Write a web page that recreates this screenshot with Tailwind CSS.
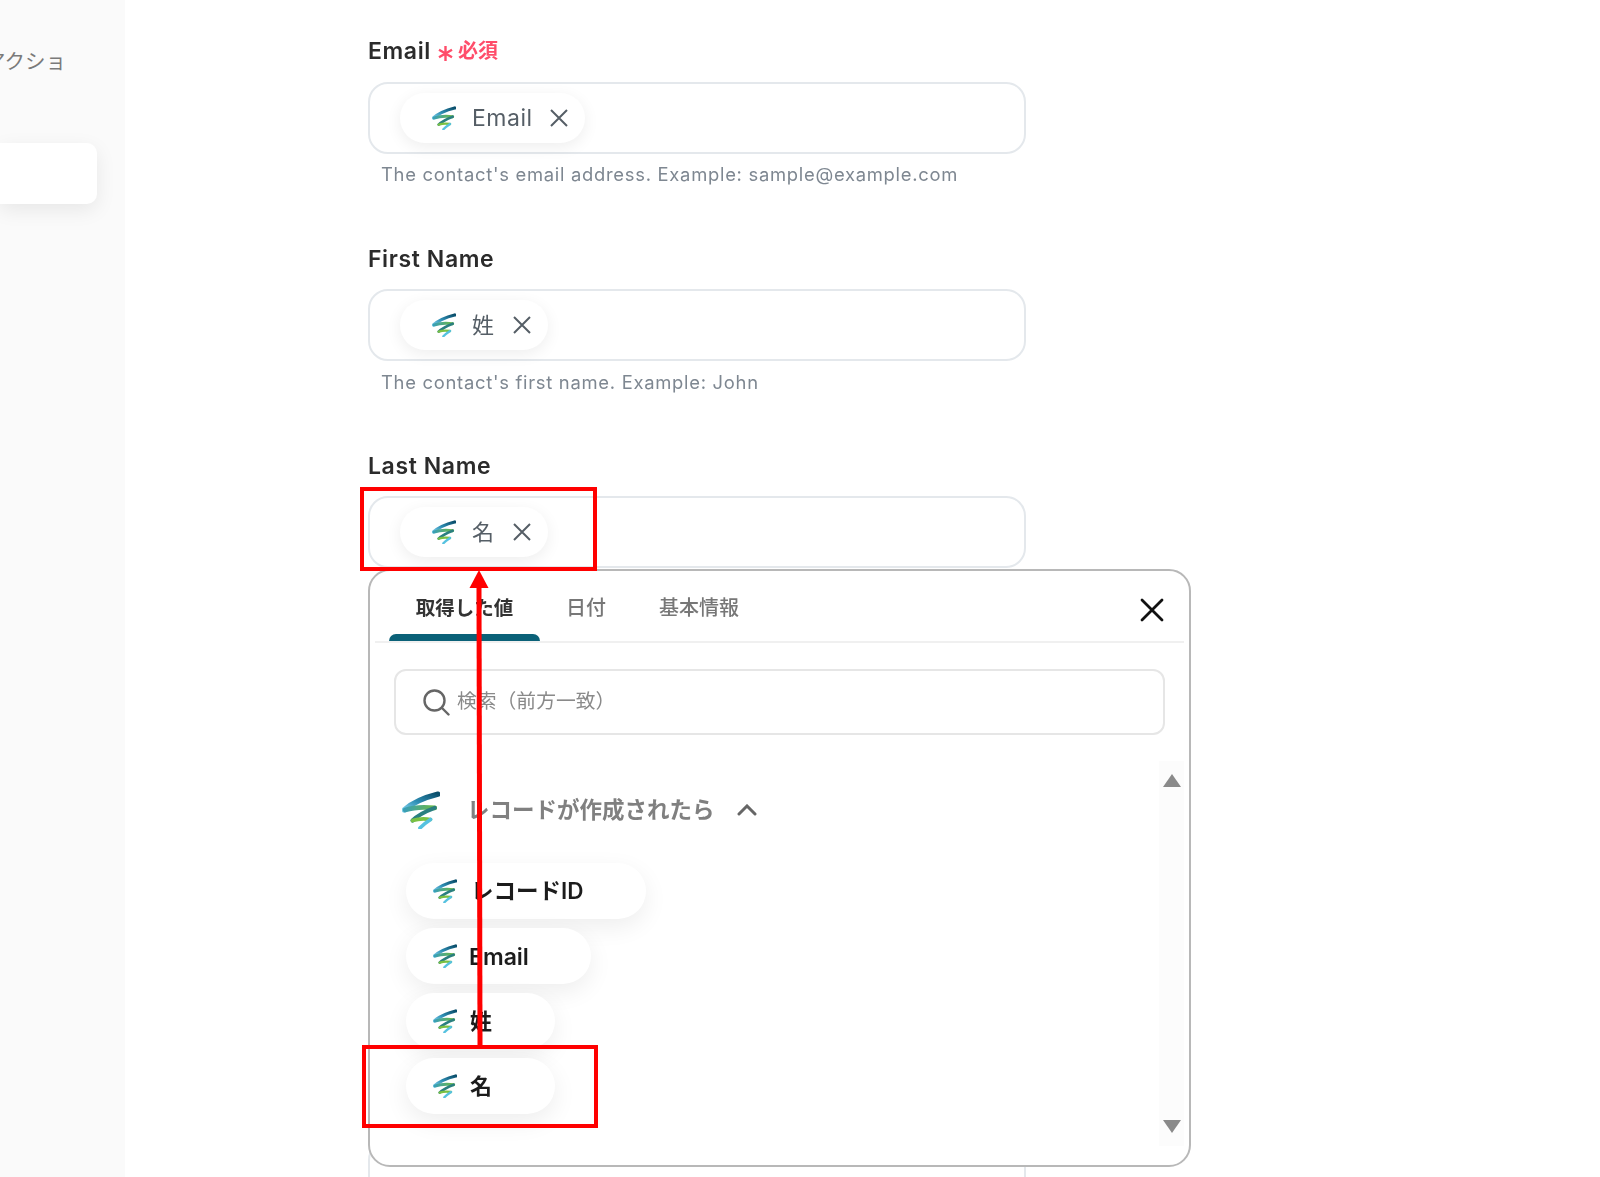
<!DOCTYPE html>
<html lang="ja">
<head>
    <meta charset="UTF-8">
    <title>Last Name</title>
    <script src="https://cdn.jsdelivr.net/npm/@tailwindcss/browser@4"></script>
</head>
<body class="bg-white font-['Inter','Noto_Sans_CJK_JP',sans-serif]">
    <!-- shared logo -->
    <svg class="absolute w-0 h-0">
        <defs>
            <linearGradient id="swooshTop" x1="1" y1="0" x2="0" y2="1">
                <stop offset="0" stop-color="#0b4f6c"/>
                <stop offset="0.55" stop-color="#2f8fb5"/>
                <stop offset="1" stop-color="#7fd0ec"/>
            </linearGradient>
            <linearGradient id="swooshMid" x1="0" y1="0" x2="1" y2="0">
                <stop offset="0" stop-color="#3a9fb5"/>
                <stop offset="1" stop-color="#6cb944"/>
            </linearGradient>
            <symbol id="logo" viewBox="0 0 36 36" fill="none" stroke-linecap="round">
                <path d="M34 3C22 6 10 11 2 18" stroke="url(#swooshTop)" stroke-width="5"/>
                <path d="M3 18C12 15 22 15 31 16" stroke="url(#swooshMid)" stroke-width="4.500"/>
                <path d="M31 16C23 19 15 23 10 28" stroke="#2a7f80" stroke-width="4"/>
                <path d="M10 28C16 26 22 26 27 27" stroke="#7ac143" stroke-width="3.500"/>
                <path d="M27 27C24 29 20 32 17 35" stroke="#56c2e0" stroke-width="3.500"/>
            </symbol>
        </defs>
    </svg>

    <div class="relative w-[1600px] h-[1177px] overflow-hidden">
        <div class="flex w-[1600px] h-[1177px] blur-[0.4px]">
            <aside class="w-[125px] shrink-0 bg-[#fafafa] overflow-hidden">
                <div class="mt-[48px] -ml-[15px] h-[28px] leading-[28px] text-[20.500px] text-[#7a7a7a] whitespace-nowrap">アクショ</div>
                <div class="mt-[67px] w-[97px] h-[61px] bg-white rounded-r-[10px] shadow-[0_6px_20px_rgba(0,0,0,0.08)]"></div>
            </aside>

            <main class="pl-[243px] w-[901px] shrink-0">
                <section class="h-[207px] pt-[37px]">
                    <div class="flex items-center h-[28px]">
                        <span class="text-[23px] tracking-[0.6px] font-semibold text-[#2b2b2b]">Email</span>
                        <svg class="ml-[7px] mt-[4px] w-[15px] h-[15px]" viewBox="0 0 15 15" fill="none" stroke="#ff4d6a" stroke-width="2.400"><path d="M7.500 0v15M1 3.750l13 7.500M14 3.750l-13 7.500"/></svg>
                        <span class="ml-[5px] text-[20px] font-bold text-[#ff4d6a]">必須</span>
                    </div>
                    <div class="mt-[17px] h-[72px] border-2 border-[#e4e8ec] rounded-[20px] pl-[30px] flex items-center">
                        <div class="h-[50px] w-[185px] rounded-full bg-white shadow-[0_4px_16px_rgba(0,0,0,0.07)] flex items-center pl-[32px]">
                            <svg class="w-[24px] h-[24px]"><use href="#logo"/></svg>
                            <span class="ml-[16px] text-[23px] tracking-[0.5px] text-[#555e66]">Email</span>
                            <svg class="ml-[16px] w-[20px] h-[20px]" viewBox="0 0 20 20" fill="none" stroke="#555e66" stroke-width="2"><path d="M2 2l16 16M18 2L2 18"/></svg>
                        </div>
                    </div>
                    <p class="mt-[8px] ml-[13px] text-[18.400px] tracking-[0.72px] leading-[24px] text-[#7e8791] whitespace-nowrap">The contact's email address. Example: sample@example.com</p>
                </section>

                <section class="h-[207px] pt-[38px]">
                    <div class="h-[28px] flex items-center text-[23px] tracking-[0.6px] font-semibold text-[#2b2b2b]">First Name</div>
                    <div class="mt-[16px] h-[72px] border-2 border-[#e4e8ec] rounded-[20px] pl-[30px] flex items-center">
                        <div class="h-[50px] w-[148px] rounded-full bg-white shadow-[0_4px_16px_rgba(0,0,0,0.07)] flex items-center pl-[32px]">
                            <svg class="w-[24px] h-[24px]"><use href="#logo"/></svg>
                            <span class="ml-[16px] text-[22px] text-[#555e66]">姓</span>
                            <svg class="ml-[18px] w-[20px] h-[20px]" viewBox="0 0 20 20" fill="none" stroke="#555e66" stroke-width="2"><path d="M2 2l16 16M18 2L2 18"/></svg>
                        </div>
                    </div>
                    <p class="mt-[9px] ml-[13px] text-[18.400px] tracking-[0.72px] leading-[24px] text-[#7e8791] whitespace-nowrap">The contact's first name. Example: John</p>
                </section>

                <section class="h-[207px] pt-[38px]">
                    <div class="h-[28px] flex items-center text-[23px] tracking-[0.6px] font-semibold text-[#2b2b2b]">Last Name</div>
                    <div class="mt-[16px] h-[72px] border-2 border-[#e4e8ec] rounded-[20px] pl-[30px] flex items-center">
                        <div class="h-[50px] w-[148px] rounded-full bg-white shadow-[0_4px_16px_rgba(0,0,0,0.07)] flex items-center pl-[32px]">
                            <svg class="w-[24px] h-[24px]"><use href="#logo"/></svg>
                            <span class="ml-[16px] text-[22px] text-[#555e66]">名</span>
                            <svg class="ml-[18px] w-[20px] h-[20px]" viewBox="0 0 20 20" fill="none" stroke="#555e66" stroke-width="2"><path d="M2 2l16 16M18 2L2 18"/></svg>
                        </div>
                    </div>
                </section>
            </main>

            <!-- next field, mostly hidden behind the popup -->
            <div class="absolute left-[368px] top-[1140px] w-[658px] h-[72px] border-2 border-[#e4e8ec] rounded-[20px]"></div>

            <!-- value picker popup -->
            <div class="absolute left-[368px] top-[569px] w-[823px] h-[598px] bg-white border-2 border-[#b8b8b8] rounded-[22px] px-[5px]">
                <div class="relative h-[72px] border-b-2 border-[#f0f0f0] flex items-start pl-[14px]">
                    <div class="w-[151px] h-[70px] flex flex-col items-center pt-[22px]">
                        <span class="text-[19.500px] leading-[30px] font-bold text-[#333]">取得した値</span>
                        <div class="mt-auto w-full h-[7px] bg-[#0b6178] rounded-t-[8px]"></div>
                    </div>
                    <span class="ml-[26px] mt-[22px] text-[20px] leading-[30px] font-medium text-[#777]">日付</span>
                    <span class="ml-[53px] mt-[22px] text-[20px] leading-[30px] font-medium text-[#777]">基本情報</span>
                    <svg class="absolute right-[20px] top-[27px] w-[24px] h-[24px]" viewBox="0 0 24 24" fill="none" stroke="#111" stroke-width="2.800" stroke-linecap="round"><path d="M2 2l20 20M22 2L2 22"/></svg>
                </div>

                <div class="mt-[26px] ml-[19px] w-[771px] h-[66px] border-2 border-[#e6e6e6] rounded-[12px] flex items-center pl-[26px]">
                    <svg class="w-[28px] h-[28px]" viewBox="0 0 28 28" fill="none" stroke="#666" stroke-width="2.400" stroke-linecap="round"><circle cx="12.500" cy="12.500" r="10"/><path d="M20 20l6.500 6.500"/></svg>
                    <span class="ml-[7px] text-[19.800px] text-[#8a8a8a]">検索（前方一致）</span>
                </div>

                <div class="relative mt-[26px] h-[385px] pl-[27px]">
                    <div class="absolute right-0 top-0 w-[25px] h-full bg-[#fcfcfc] flex flex-col items-center justify-between py-[13px]">
                        <svg class="w-[18px] h-[13px]" viewBox="0 0 18 13" fill="#8a8a8a"><path d="M9 0l9 13H0z"/></svg>
                        <svg class="w-[18px] h-[13px]" viewBox="0 0 18 13" fill="#8a8a8a"><path d="M0 0h18L9 13z"/></svg>
                    </div>

                    <div class="flex items-center pt-[25px] h-[72px]">
                        <svg class="w-[38px] h-[38px]"><use href="#logo"/></svg>
                        <span class="ml-[27px] text-[22.500px] font-semibold text-[#808080]">レコードが作成されたら</span>
                        <svg class="ml-[22px] w-[20px] h-[12px]" viewBox="0 0 20 12" fill="none" stroke="#666" stroke-width="3" stroke-linecap="round"><path d="M2 10l8-8 8 8"/></svg>
                    </div>

                    <div class="mt-[30px] ml-[4px] flex flex-col items-start gap-[9px]">
                        <div class="h-[56px] w-[240px] rounded-full bg-white shadow-[0_8px_24px_rgba(0,0,0,0.07)] flex items-center pl-[27px]">
                            <svg class="w-[24px] h-[24px]"><use href="#logo"/></svg>
                            <span class="ml-[14px] text-[22.500px] font-semibold text-[#1c1c1c]">レコードID</span>
                        </div>
                        <div class="h-[56px] w-[185px] rounded-full bg-white shadow-[0_8px_24px_rgba(0,0,0,0.07)] flex items-center pl-[27px]">
                            <svg class="w-[24px] h-[24px]"><use href="#logo"/></svg>
                            <span class="ml-[12px] pt-[2px] text-[23px] font-semibold text-[#1c1c1c]">Email</span>
                        </div>
                        <div class="h-[56px] w-[149px] rounded-full bg-white shadow-[0_8px_24px_rgba(0,0,0,0.07)] flex items-center pl-[27px]">
                            <svg class="w-[24px] h-[24px]"><use href="#logo"/></svg>
                            <span class="ml-[13px] text-[22px] font-semibold text-[#1c1c1c]">姓</span>
                        </div>
                        <div class="h-[56px] w-[149px] rounded-full bg-white shadow-[0_8px_24px_rgba(0,0,0,0.07)] flex items-center pl-[27px]">
                            <svg class="w-[24px] h-[24px]"><use href="#logo"/></svg>
                            <span class="ml-[13px] text-[22px] font-semibold text-[#1c1c1c]">名</span>
                        </div>
                    </div>
                </div>
            </div>
        </div>

        <!-- red annotations -->
        <div class="absolute left-[360px] top-[487px] w-[237px] h-[84px] border-[4px] border-[#ff0000]"></div>
        <div class="absolute left-[362px] top-[1045px] w-[236px] h-[83px] border-[4px] border-[#ff0000]"></div>
        <svg class="absolute left-[465px] top-[570px]" width="30" height="477" viewBox="0 0 30 477" fill="#ff0000">
            <path d="M14 0l9.500 18H4.500z"/>
            <path d="M11.500 16h5l1 461h-5z"/>
        </svg>
    </div>
</body>
</html>
